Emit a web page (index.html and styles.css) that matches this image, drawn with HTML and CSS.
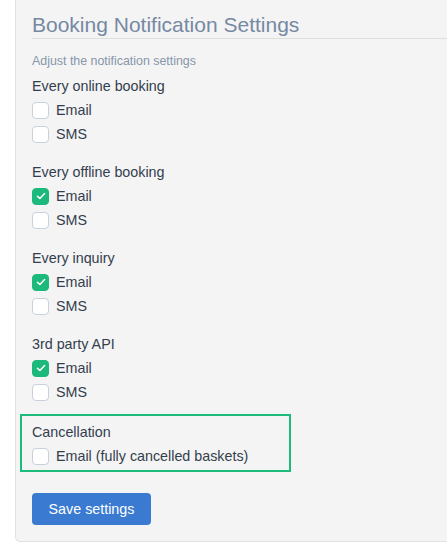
FILE: index.html
```html
<!DOCTYPE html>
<html>
<head>
<meta charset="utf-8">
<link rel="stylesheet" href="styles.css">
</head>
<body>
<div class="panel">
  <h2 class="title">Booking Notification Settings</h2>
  <p class="subtitle">Adjust the notification settings</p>

  <div class="group">
    <div class="group-label">Every online booking</div>
    <label class="row"><span class="box"></span>Email</label>
    <label class="row"><span class="box"></span>SMS</label>
  </div>

  <div class="group">
    <div class="group-label">Every offline booking</div>
    <label class="row"><span class="box checked"><svg viewBox="0 0 16 16" width="12" height="12"><path d="M3.2 8.4 L6.5 11.4 L12.8 4.8" fill="none" stroke="#fff" stroke-width="2" stroke-linecap="round" stroke-linejoin="round"/></svg></span>Email</label>
    <label class="row"><span class="box"></span>SMS</label>
  </div>

  <div class="group">
    <div class="group-label">Every inquiry</div>
    <label class="row"><span class="box checked"><svg viewBox="0 0 16 16" width="12" height="12"><path d="M3.2 8.4 L6.5 11.4 L12.8 4.8" fill="none" stroke="#fff" stroke-width="2" stroke-linecap="round" stroke-linejoin="round"/></svg></span>Email</label>
    <label class="row"><span class="box"></span>SMS</label>
  </div>

  <div class="group">
    <div class="group-label">3rd party API</div>
    <label class="row"><span class="box checked"><svg viewBox="0 0 16 16" width="12" height="12"><path d="M3.2 8.4 L6.5 11.4 L12.8 4.8" fill="none" stroke="#fff" stroke-width="2" stroke-linecap="round" stroke-linejoin="round"/></svg></span>Email</label>
    <label class="row"><span class="box"></span>SMS</label>
  </div>

  <div class="highlight">
    <div class="group-label">Cancellation</div>
    <label class="row"><span class="box"></span>Email (fully cancelled baskets)</label>
  </div>

  <button class="save">Save settings</button>
</div>
</body>
</html>
```

FILE: styles.css
```css
* { box-sizing: border-box; }
html, body {
  margin: 0;
  padding: 0;
  background: #ffffff;
}
body {
  font-family: "Liberation Sans", Arial, sans-serif;
  color: #333e4e;
}
.panel {
  margin-left: 15px;
  background: #f4f4f4;
  border: 1px solid #e2e2e2;
  border-top: none;
  border-right: none;
  border-radius: 0 0 0 5px;
  padding: 13px 0 16px 16px;
}
.title {
  margin: 0;
  font-size: 21px;
  font-weight: normal;
  line-height: 24px;
  color: #7689a3;
  padding-bottom: 1px;
  border-bottom: 1px solid #dedede;
}
.subtitle {
  margin: 14px 0 0;
  font-size: 12.4px;
  line-height: 16px;
  color: #8796ab;
}
.group {
  margin-top: 5px;
  margin-bottom: 14px;
}
.group + .group { margin-top: 0; }
.group-label {
  font-size: 14.3px;
  line-height: 24px;
  color: #333e4e;
}
.row {
  display: flex;
  align-items: center;
  height: 24px;
  font-size: 14.3px;
  color: #333e4e;
}
.box {
  width: 17px;
  height: 17px;
  margin-right: 7px;
  border: 1px solid #c9d1dd;
  border-radius: 4px;
  background: #ffffff;
  display: flex;
  align-items: center;
  justify-content: center;
  flex: none;
}
.box.checked {
  background: #1bb97c;
  border-color: #1bb97c;
}
.highlight {
  margin: -4px 0 0 -12px;
  width: 271px;
  border: 2px solid #1dbb7b;
  padding: 4px 0 2px 10px;
}
.save {
  margin-top: 21px;
  display: block;
  width: 119px;
  height: 32px;
  border: none;
  border-radius: 4px;
  background: #3a7bd1;
  color: #ffffff;
  font-family: "Liberation Sans", Arial, sans-serif;
  font-size: 14.3px;
  padding: 0;
}
```
